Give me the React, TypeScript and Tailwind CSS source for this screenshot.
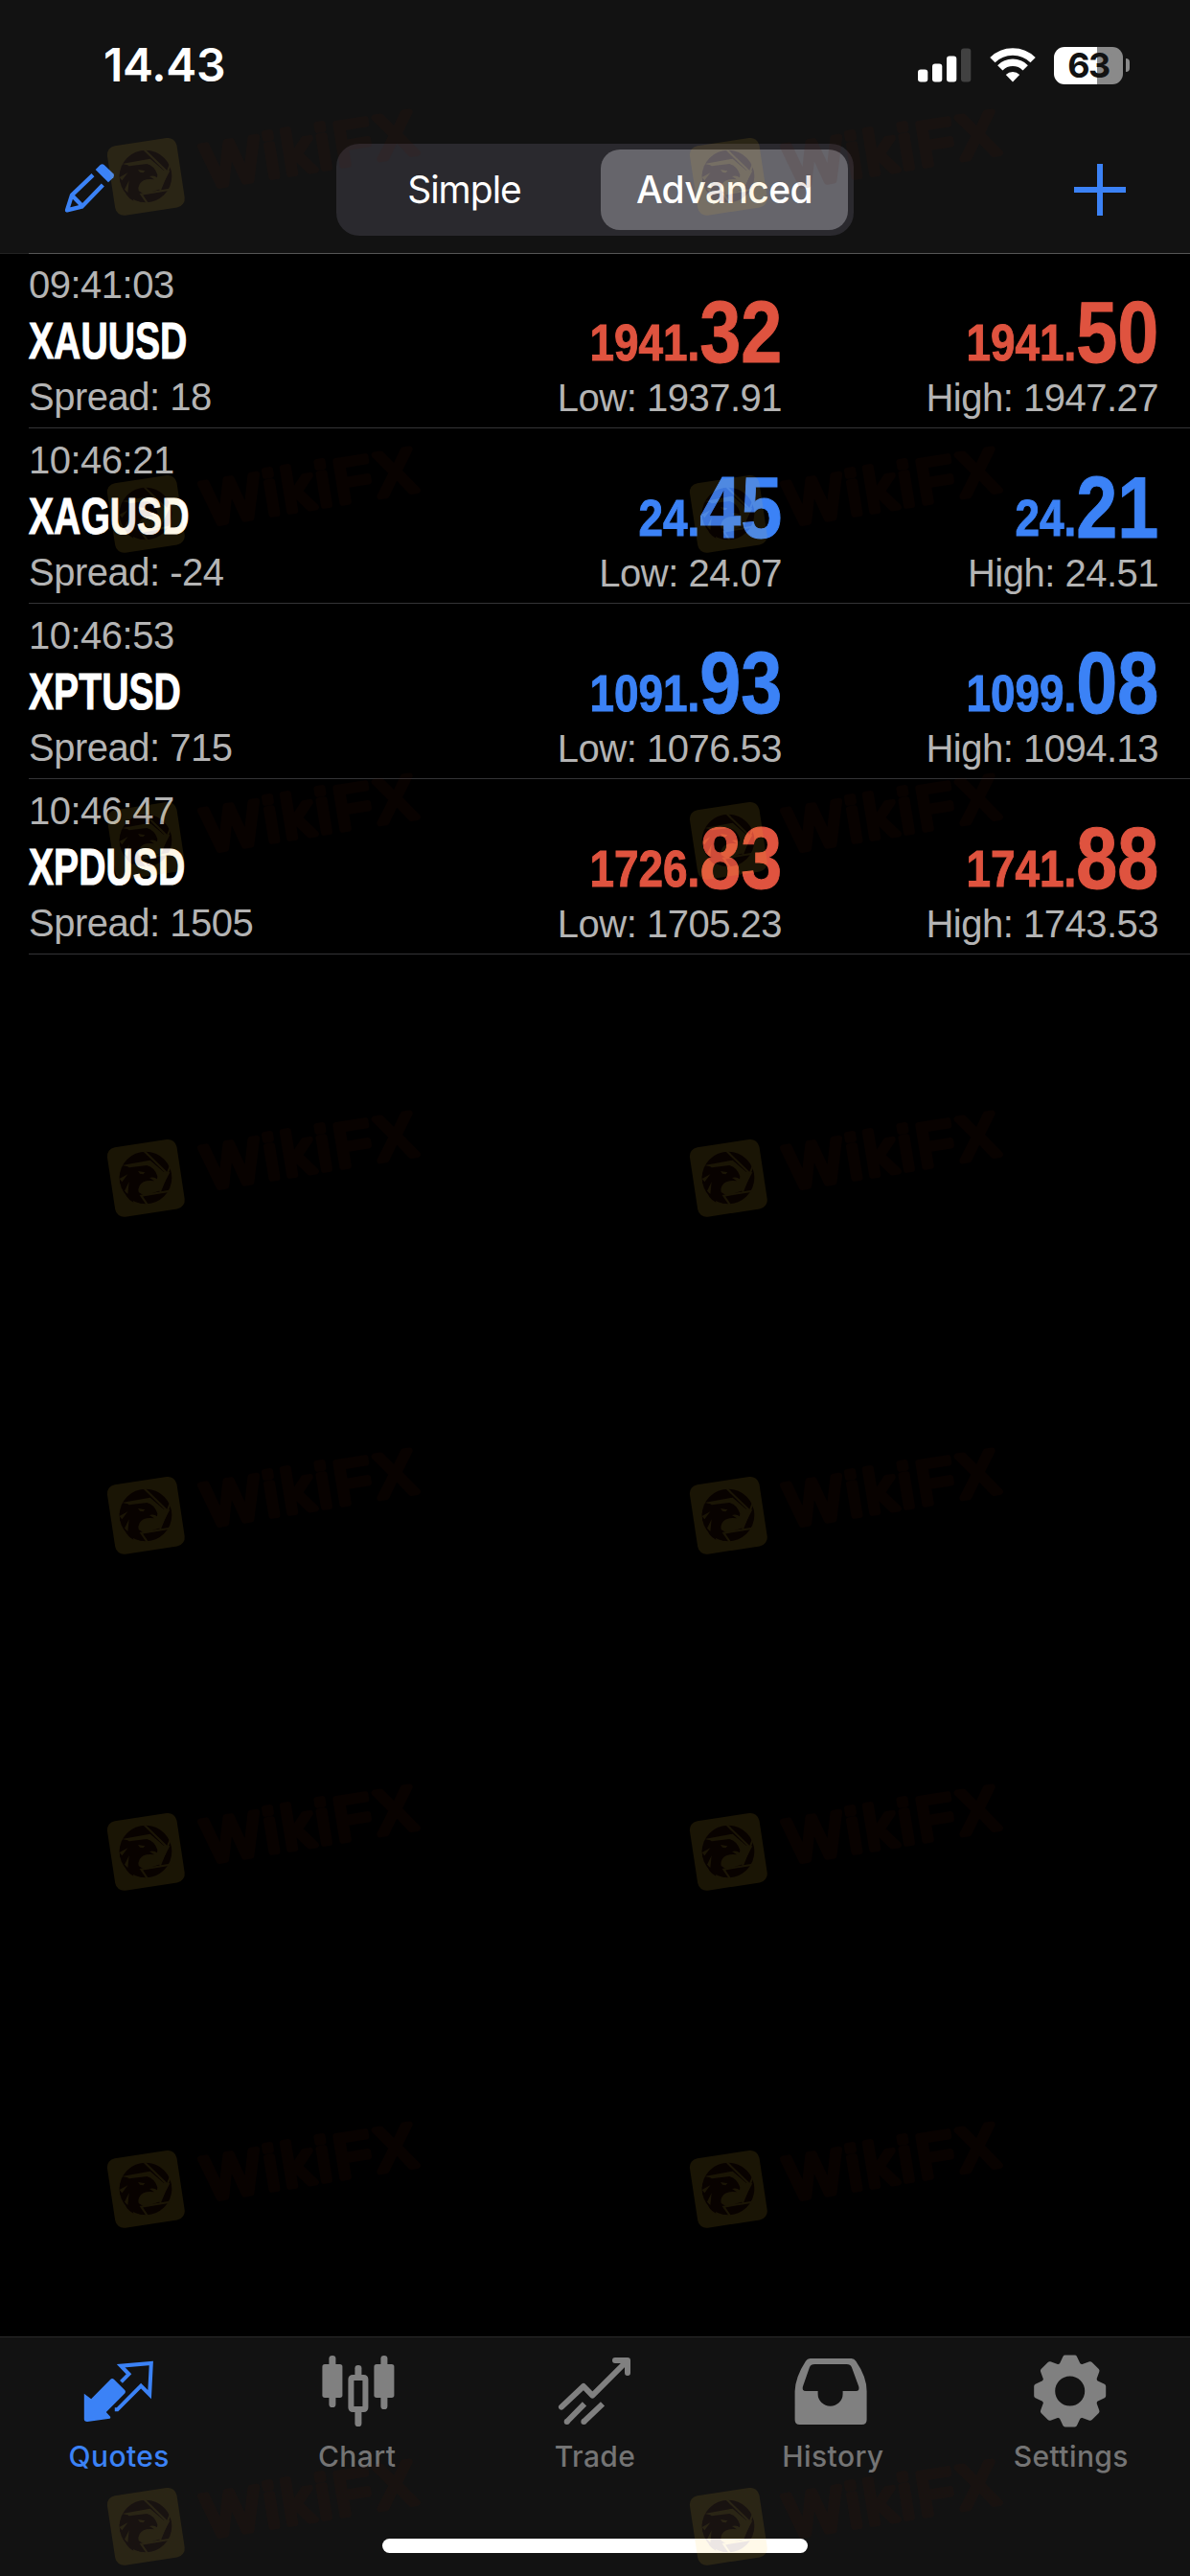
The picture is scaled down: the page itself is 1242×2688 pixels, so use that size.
import type { ReactNode } from 'react';

type Quote = {
  symbol: string;
  time: string;
  spread: string;
  bid: [string, string];
  ask: [string, string];
  low: string;
  high: string;
  trend: 'up' | 'down';
};

const quotes: Quote[] = [
  { symbol: 'XAUUSD', time: '09:41:03', spread: '18', bid: ['1941.', '32'], ask: ['1941.', '50'], low: '1937.91', high: '1947.27', trend: 'down' },
  { symbol: 'XAGUSD', time: '10:46:21', spread: '-24', bid: ['24.', '45'], ask: ['24.', '21'], low: '24.07', high: '24.51', trend: 'up' },
  { symbol: 'XPTUSD', time: '10:46:53', spread: '715', bid: ['1091.', '93'], ask: ['1099.', '08'], low: '1076.53', high: '1094.13', trend: 'up' },
  { symbol: 'XPDUSD', time: '10:46:47', spread: '1505', bid: ['1726.', '83'], ask: ['1741.', '88'], low: '1705.23', high: '1743.53', trend: 'down' },
];

const watermarkTops = [95, 447, 788, 1140, 1492, 1843, 2195, 2547];
const watermarkLefts = [90, 698];

function StatusBar() {
  return (
    <div className="flex h-[132px] items-center justify-between pt-1 pr-[63px] pl-[108px]">
      <span className="text-[48px] leading-none font-semibold tracking-[-0.2px]">14.43</span>
      <div className="flex items-center">
        <svg width="56" height="36" viewBox="0 0 56 36" fill="#fff">
          <rect x="0" y="22.5" width="10.3" height="13" rx="3" />
          <rect x="15" y="16.5" width="10.3" height="19" rx="3" />
          <rect x="30" y="8.5" width="10.3" height="27" rx="3" />
          <rect x="45" y="0.5" width="10.3" height="35" rx="3" fill="#414141" />
        </svg>
        <svg className="ml-[19px]" width="48" height="36" viewBox="0 0 48 36" fill="none" stroke="#fff" strokeWidth="7.5">
          <path d="M2.9 12.6A30 30 0 0 1 45.1 12.6" />
          <path d="M10.8 20.8A18.6 18.6 0 0 1 37.2 20.8" />
          <path d="M24 35.5 16.8 28A10.2 10.2 0 0 1 31.2 28Z" fill="#fff" stroke="none" />
        </svg>
        <div className="ml-[19px] flex h-[39px] w-[72px] items-center justify-center rounded-[11px] bg-linear-to-r from-white from-63% to-[#8a8a8a] to-63%">
          <span className="text-[36px] leading-none font-bold tracking-[-1.5px] text-[#121212]">63</span>
        </div>
        <div className="ml-[3px] h-[14px] w-[4px] rounded-r-full bg-[#8a8a8a]" />
      </div>
    </div>
  );
}

function NavBar() {
  return (
    <div className="flex h-[132px] items-center justify-between pr-[67px] pl-[66px]">
      <svg className="-mt-1" width="55" height="55" viewBox="18 86 165 165" fill="#3b82f6">
        <path d="M119 110 134 95Q140 90 146 95L175 123Q180 129 175 135L159 150Z" />
        <path
          d="M111 127 45 190 30 237 76 226 142 158M45 190 78 224"
          fill="none"
          stroke="#3b82f6"
          strokeWidth="13"
          strokeLinejoin="round"
        />
      </svg>
      <div className="flex h-24 w-[540px] rounded-[24px] bg-[#2a292e] p-[6px]">
        <div className="flex flex-1 items-center justify-center pr-[15px] text-[39px] tracking-[-1px]">Simple</div>
        <div className="flex w-[258px] items-center justify-center rounded-[20px] bg-[#66656b] text-[39px] font-medium tracking-[-0.6px]">
          Advanced
        </div>
      </div>
      <svg width="54" height="54" viewBox="0 0 54 54" stroke="#3b82f6" strokeWidth="6">
        <path d="M27 0V54M0 27H54" />
      </svg>
    </div>
  );
}

function Price({ value, label, trend }: { value: [string, string]; label: string; trend: Quote['trend'] }) {
  return (
    <div className="flex flex-col items-end pt-[45px]">
      <div
        className={`origin-right scale-x-[0.85] text-[91px] leading-[73px] font-bold whitespace-nowrap [-webkit-text-stroke:1px_currentColor] ${
          trend === 'up' ? 'text-[#3b82f6]' : 'text-[#df533f]'
        }`}
      >
        <span className="relative -top-[2px] text-[54px] leading-none">{value[0]}</span>
        {value[1]}
      </div>
      <div className="-mt-px text-[40px] leading-[61px] tracking-[-0.5px] whitespace-nowrap text-[#b4b4b4]">{label}</div>
    </div>
  );
}

function QuoteRow({ quote, first }: { quote: Quote; first: boolean }) {
  return (
    <div
      className={`ml-[30px] grid h-[183px] grid-cols-[392px_394px_393px] border-t border-b border-b-[#343436] font-['Liberation_Sans',Arial,sans-serif] ${
        first ? 'border-t-[#555555]' : 'border-t-transparent'
      }`}
    >
      <div className="pt-[2px] text-[40px] tracking-[-0.5px] text-[#b4b4b4]">
        <div className="leading-[60px]">{quote.time}</div>
        <div className="w-max origin-left scale-x-[0.725] text-[54px] leading-[56px] font-bold tracking-normal text-white [-webkit-text-stroke:1px_currentColor]">
          {quote.symbol}
        </div>
        <div className="mt-px leading-[61px]">Spread: {quote.spread}</div>
      </div>
      <Price value={quote.bid} label={`Low: ${quote.low}`} trend={quote.trend} />
      <Price value={quote.ask} label={`High: ${quote.high}`} trend={quote.trend} />
    </div>
  );
}

function Tab({ label, viewBox, active, children }: { label: string; viewBox: string; active?: boolean; children: ReactNode }) {
  return (
    <div className={`flex flex-1 flex-col items-center gap-2 ${active ? 'text-[#3b82f6]' : 'text-[#808080]'}`}>
      <svg width="80" height="80" viewBox={viewBox} fill="currentColor">
        {children}
      </svg>
      <span className={`text-[30px] leading-[40px] font-medium tracking-[0.4px] ${active ? '' : 'text-[#747474]'}`}>{label}</span>
    </div>
  );
}

function TabBar() {
  return (
    <div className="h-[250px] border-t border-[#2a2a2a] bg-[#121212] pt-4">
      <div className="flex">
        <Tab label="Quotes" viewBox="72.6 30 240 240" active>
          <path d="M84 158 106 175 166 114Q172 108 178 114L212 148Q215 153 212 157L153 216 166 230Q168 235 164 236L94 246Q84 246 84 238Z" />
          <path d="M200 121 224 97 199 71 294 63 289 161 262 134 188 208H180" fill="none" stroke="currentColor" strokeWidth="12" />
        </Tab>
        <Tab label="Chart" viewBox="817.8 30 240 240">
          <rect x="849" y="39" width="21" height="162" rx="10" />
          <rect x="828" y="66" width="63" height="105" rx="8" />
          <rect x="1011" y="39" width="21" height="168" rx="10" />
          <rect x="990" y="66" width="63" height="105" rx="8" />
          <rect x="930" y="69" width="21" height="40" rx="10" />
          <rect x="930" y="205" width="21" height="56" rx="10" />
          <rect x="918" y="108" width="45" height="99" rx="5" fill="none" stroke="currentColor" strokeWidth="18" />
        </Tab>
        <Tab label="Trade" viewBox="63 30 240 240">
          <g fill="none" stroke="currentColor" strokeWidth="18">
            <path d="M78 200 147 135 175 164 282 57" strokeLinecap="round" strokeLinejoin="round" />
            <path d="M246 54H285V93" strokeLinecap="round" strokeLinejoin="round" />
            <path d="M150 190 95 246M207 190 148 246" />
          </g>
          <circle cx="95" cy="246" r="9" />
          <circle cx="148" cy="246" r="9" />
        </Tab>
        <Tab label="History" viewBox="808.2 30 240 240">
          <path
            fillRule="evenodd"
            d="M858 48H987Q996 48 1001 56 1035 105 1035 150V240Q1035 255 1020 255H825Q810 255 810 240V150Q812 105 844 56 849 48 858 48ZM872 66Q860 66 856 76L835 136Q831 150 844 150H882V159A39 38 0 0 0 960 159V150H1001Q1014 150 1010 136L988 76Q984 66 972 66Z"
          />
        </Tab>
        <Tab label="Settings" viewBox="1.3 0.5 80 80">
          <path
            fillRule="evenodd"
            d="M40 10A30.5 30.5 0 0 1 40 71 30.5 30.5 0 0 1 40 10ZM40 25A15.5 15.5 0 0 0 40 56 15.5 15.5 0 0 0 40 25Z"
          />
          {[0, 45, 90, 135, 180, 225, 270, 315].map((angle) => (
            <path
              key={angle}
              d="M35 5.5H45L49 14H31Z"
              stroke="currentColor"
              strokeWidth="5"
              strokeLinejoin="round"
              transform={`rotate(${angle} 40 40.5)`}
            />
          ))}
        </Tab>
      </div>
      <div className="mx-auto mt-[66px] h-[15px] w-[444px] rounded-full bg-white" />
    </div>
  );
}

function Watermark() {
  return (
    <svg width="380" height="150" viewBox="0 0 1140 450" opacity="0.1">
      <rect x="77" y="158" width="220" height="220" rx="28" fill="#ffc832" transform="rotate(-8.6 187 268)" />
      <circle cx="186" cy="267" r="82" fill="#501408" />
      {/* shutter opening and blade gaps */}
      <path d="M112 228 200 212 242 248 262 250 232 307 182 323 164 312 158 290 170 270 130 232Z" fill="#ffc832" />
      <path d="M182 184 250 250M264 228 231 310M262 308 172 323 192 352" fill="none" stroke="#ffc832" strokeWidth="6" />
      {/* eagle head */}
      <path
        d="M104 262Q112 234 146 233L190 228Q214 234 223 262L222 271Q212 263 198 267L213 277Q178 272 167 292 156 312 174 347 152 345 144 320L148 344Q118 328 120 300L106 284Z"
        fill="#501408"
      />
      <path d="M162 246 184 250 178 256 168 254ZM104 270 130 256 112 280ZM120 308 134 280 130 318Z" fill="#ffc832" />
      <text
        transform="translate(378 302) rotate(-9.3)"
        textLength="672"
        className="font-['Liberation_Sans',sans-serif] text-[190px]"
        fill="#501408"
        stroke="#501408"
        strokeWidth="20"
        strokeLinejoin="round"
      >
        WikiFX
      </text>
    </svg>
  );
}

export default function App() {
  return (
    <div className="relative flex h-[2688px] w-[1242px] flex-col overflow-hidden bg-black font-['Inter',sans-serif] text-white">
      <header className="h-[265px] border-b border-[#222222] bg-[#121212]">
        <StatusBar />
        <NavBar />
      </header>
      <main className="-mt-px flex-1">
        {quotes.map((quote, i) => (
          <QuoteRow key={quote.symbol} quote={quote} first={i === 0} />
        ))}
      </main>
      <TabBar />
      {watermarkTops.map((top) =>
        watermarkLefts.map((left) => (
          <div key={`${top}-${left}`} className="pointer-events-none absolute" style={{ top, left }}>
            <Watermark />
          </div>
        )),
      )}
    </div>
  );
}
